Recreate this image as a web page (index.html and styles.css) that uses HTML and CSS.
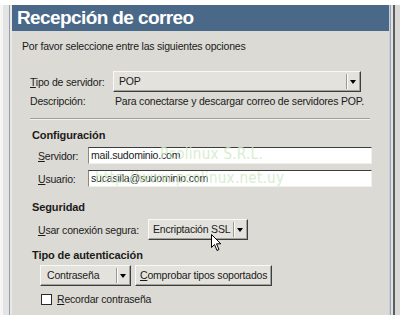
FILE: index.html
```html
<!DOCTYPE html>
<html lang="es">
<head>
    <meta charset="UTF-8">
    <title>Recepción de correo</title>
    <link rel="stylesheet" href="styles.css">
</head>
<body>
    <div class="screen">
        <div class="gutter"></div>
        <div class="window">
            <div class="titlebar">Recepción de correo</div>
            <div class="content">
                <p class="intro">Por favor seleccione entre las siguientes opciones</p>

                <div class="row top-row">
                    <span class="label wide-label"><u>T</u>ipo de servidor:</span>
                    <div class="combo combo-server">
                        <span class="value">POP</span>
                        <span class="arrow"></span>
                    </div>
                </div>
                <div class="row desc-row">
                    <span class="label wide-label">Descripción:</span>
                    <span class="desc">Para conectarse y descargar correo de servidores POP.</span>
                </div>

                <div class="sep"></div>

                <h2>Configuración</h2>
                <div class="row field-row">
                    <span class="label field-label"><u>S</u>ervidor:</span>
                    <div class="entry">mail.sudominio.com</div>
                </div>
                <div class="row field-row">
                    <span class="label field-label"><u>U</u>suario:</span>
                    <div class="entry">sucasilla@sudominio.com</div>
                </div>

                <h2 class="h-seg">Seguridad</h2>
                <div class="row secure-row">
                    <span class="label secure-label"><u>U</u>sar conexión segura:</span>
                    <div class="combo combo-ssl">
                        <span class="value">Encriptación SSL</span>
                        <span class="arrow"></span>
                    </div>
                </div>

                <h2 class="h-auth">Tipo de autenticación</h2>
                <div class="row auth-row">
                    <div class="combo combo-auth">
                        <span class="value">Contraseña</span>
                        <span class="arrow"></span>
                    </div>
                    <div class="button"><u>C</u>omprobar tipos soportados</div>
                </div>
                <div class="row check-row">
                    <span class="checkbox"></span>
                    <span class="label"><u>R</u>ecordar contraseña</span>
                </div>
            </div>

            <!-- marca de agua -->
            <div class="watermark wm1">Pcolinux S.R.L.</div>
            <div class="watermark wm2">http://www.pcolinux.net.uy</div>

            <svg class="cursor" width="12" height="18" viewBox="0 0 12 18">
                <path d="M0.5 0.5 L0.5 13.5 L3.5 10.5 L6 16.5 L8 15.5 L5.5 9.8 L9.8 9.8 Z" fill="#fff" stroke="#000" stroke-width="1"/>
            </svg>
        </div>
        <div class="edge"></div>
    </div>
</body>
</html>
```

FILE: styles.css
```css
body {
    margin: 0;
    background: #fff;
    font-family: "Liberation Sans", Arial, sans-serif;
    font-size: 10.5px;
    letter-spacing: -0.2px;
    color: #1a1a1a;
}
.screen {
    display: flex;
    height: 310px;
    padding-top: 5px;
    overflow: hidden;
}
.gutter {
    width: 12px;
    background: linear-gradient(to right, #f6f6f6 0 3px, #e4e4e2 3px 9px, #8e9fb4 9px 10px, #e9e8e5 10px);
}
.window {
    position: relative;
    width: 377px;
    background: #dcdad5;
}
.edge {
    flex: 1;
    background: linear-gradient(to right, #c6cfda 0 1px, #96a6ba 1px 2px, #e2e2e0 2px 4px, #5c5c5c 4px 6px, #d8d8d6 6px);
}
.titlebar {
    height: 26px;
    background: #4a6888;
    color: #fff;
    font-size: 19px;
    font-weight: bold;
    letter-spacing: -0.6px;
    line-height: 26px;
    padding-left: 5px;
}
.content {
    padding: 9px 0 0 10px;
}
.intro {
    margin: 0;
    line-height: 13px;
}
.row {
    display: flex;
    align-items: center;
}
.label {
    white-space: nowrap;
}
.label u, .button u {
    text-decoration: underline;
}
.top-row {
    margin-top: 18px;
    margin-left: 8px;
}
.wide-label {
    width: 83px;
}
.desc-row {
    margin-top: 3px;
    margin-left: 8px;
    line-height: 13px;
}
.desc {
    margin-left: 2px;
    white-space: nowrap;
}
.sep {
    margin: 10px 19px 0 8px;
    height: 1px;
    background: #a09e99;
    border-bottom: 1px solid #f4f3f0;
}
h2 {
    margin: 9px 0 0 10px;
    font-size: 11px;
    font-weight: bold;
    line-height: 13px;
    letter-spacing: -0.1px;
}
.field-row {
    margin-left: 16px;
    margin-top: 6px;
}
h2 + .field-row {
    margin-top: 5px;
}
.field-label {
    width: 50px;
}
.entry {
    width: 280px;
    height: 15px;
    line-height: 15px;
    background: #fff;
    border: 1px solid;
    border-color: #3c3c3c #f0efec #f0efec #8a8883;
    padding-left: 2px;
    box-sizing: content-box;
}
.h-seg {
    margin-top: 14px;
}
.secure-row {
    margin-left: 16px;
    margin-top: 5px;
}
.secure-label {
    width: 110px;
}
.combo {
    display: flex;
    height: 19px;
    border: 1px solid;
    border-color: #f8f8f6 #3e3e3e #3e3e3e #f8f8f6;
    box-shadow: inset -1px -1px #a3a19c;
    background: #e4e2dd;
}
.combo .value {
    flex: 1;
    padding-left: 5px;
    line-height: 19px;
    white-space: nowrap;
}
.combo .arrow {
    width: 12px;
    margin: 2px 1px 2px 0;
    border-left: 1px solid #9a9893;
    box-shadow: inset 1px 0 #fbfbfa;
    display: flex;
    align-items: center;
    justify-content: center;
}
.combo .arrow::after {
    content: "";
    border-left: 3.5px solid transparent;
    border-right: 3.5px solid transparent;
    border-top: 4px solid #000;
}
.combo-server {
    width: 246px;
}
.combo-ssl {
    width: 98px;
}
.combo-ssl .value {
    padding-left: 4px;
}
.h-auth {
    margin-top: 9px;
}
.auth-row {
    margin-left: 18px;
    margin-top: 3px;
}
.combo-auth {
    width: 89px;
}
.combo-auth .value {
    padding-left: 6px;
}
.button {
    margin-left: 4px;
    height: 19px;
    line-height: 19px;
    padding: 0 4px;
    border: 1px solid;
    border-color: #f8f8f6 #3e3e3e #3e3e3e #f8f8f6;
    box-shadow: inset -1px -1px #a3a19c;
    background: #e4e2dd;
    white-space: nowrap;
}
.check-row {
    margin-left: 19px;
    margin-top: 7px;
}
.checkbox {
    width: 9px;
    height: 9px;
    background: #fff;
    border: 1px solid #2a2a2a;
    margin-right: 5px;
}
.watermark {
    position: absolute;
    font-family: "DejaVu Sans Condensed", "DejaVu Sans", sans-serif;
    font-size: 15px;
    letter-spacing: 0.3px;
    color: #cfeac6;
    opacity: 0.8;
    white-space: nowrap;
    pointer-events: none;
}
.wm1 {
    left: 148px;
    top: 140px;
}
.wm2 {
    left: 83px;
    top: 164px;
}
.cursor {
    position: absolute;
    left: 199px;
    top: 229px;
}
```
